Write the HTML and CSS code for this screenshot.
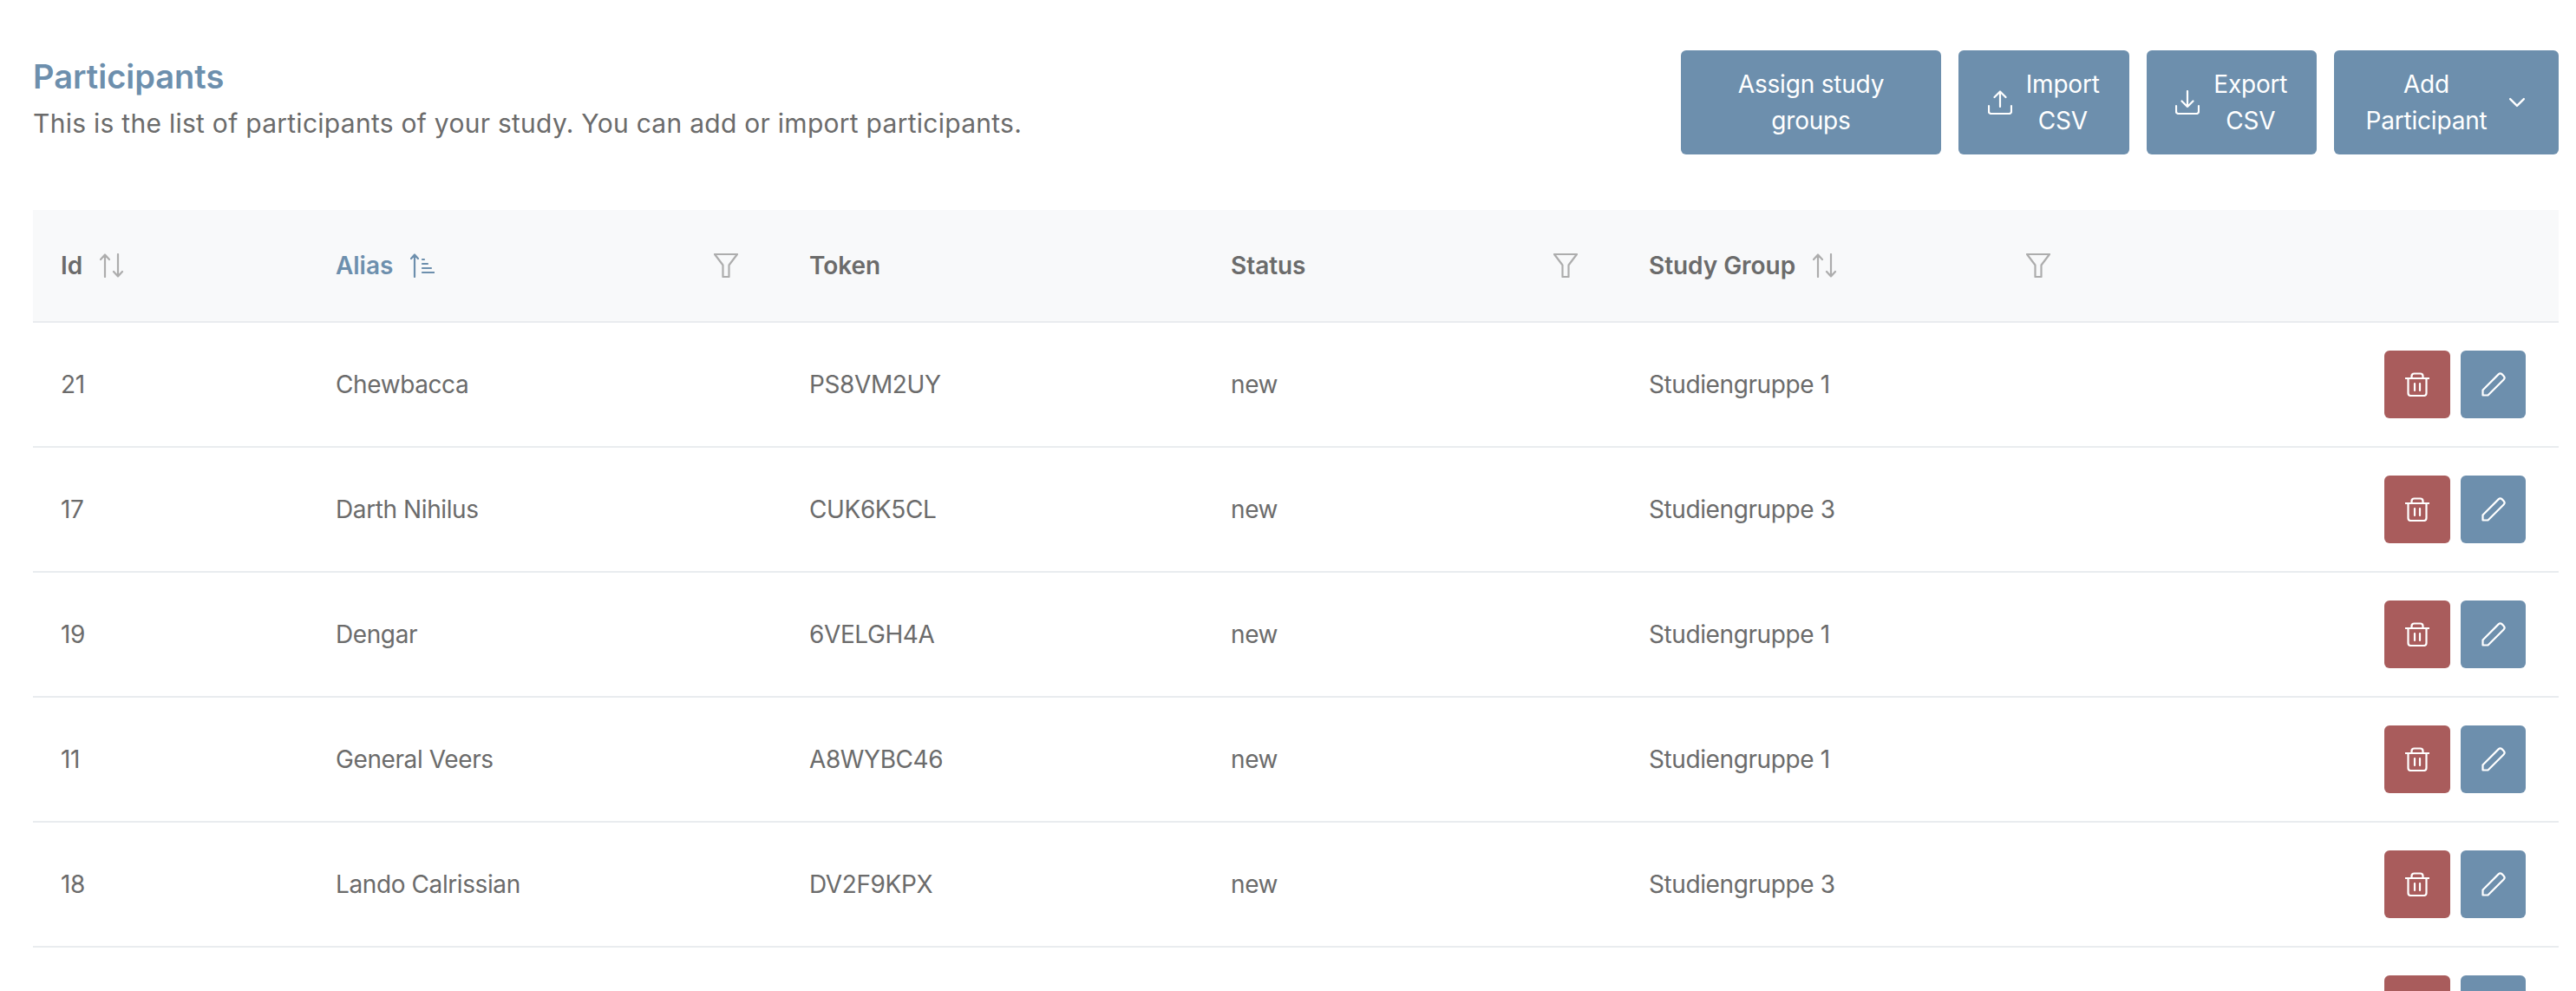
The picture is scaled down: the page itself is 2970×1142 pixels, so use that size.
FILE: index.html
```html
<!DOCTYPE html>
<html lang="en">
<head>
    <meta charset="UTF-8">
    <title>Participants</title>
    <link rel="stylesheet" href="styles.css">
</head>
<body>
    <svg class="sprite" width="0" height="0">
        <symbol id="i-upload" viewBox="0 0 28 28"><path d="M1 18v6.500a2.500 2.500 0 0 0 2.500 2.500h21a2.500 2.500 0 0 0 2.500-2.500V18M14 19V1.500M7.500 8L14 1.500 20.500 8"/></symbol>
        <symbol id="i-download" viewBox="0 0 28 28"><path d="M1 18v6.500a2.500 2.500 0 0 0 2.500 2.500h21a2.500 2.500 0 0 0 2.500-2.500V18M14 1v18M7.500 12.500L14 19l6.500-6.500"/></symbol>
        <symbol id="i-chevron" viewBox="0 0 28 28"><path d="M4 9l10 10 10-10"/></symbol>
        <symbol id="i-sort" viewBox="0 0 28 28"><path d="M6 27V1.500M1 7l5-5.500L11 7M21 1v25.500M16 21l5 5.500 5-5.500"/></symbol>
        <symbol id="i-sort-asc" viewBox="0 0 28 28"><path d="M5 27V1.500M1 6l4-4.500L9 6M14 7h2M14 12h6M14 17h10M14 22h14"/></symbol>
        <symbol id="i-filter" viewBox="0 0 28 28"><path d="M1 1h26L17.500 13.500V27h-7V13.500z"/></symbol>
        <symbol id="i-trash" viewBox="0 0 28 28"><path d="M0.500 7h27M3.500 7v17a3 3 0 0 0 3 3h15a3 3 0 0 0 3-3V7M7.500 7V4.500a3 3 0 0 1 3-3h7a3 3 0 0 1 3 3V7M11 13v8M17 13v8"/></symbol>
        <symbol id="i-pencil" viewBox="0 0 28 28"><path d="M1.500 26.500v-6L19.600 2.400a3 3 0 0 1 4.200 0l1.800 1.800a3 3 0 0 1 0 4.200L7.500 26.500z"/></symbol>
    </svg>

    <div class="page">
        <div class="toolbar">
            <div class="intro">
                <h1>Participants</h1>
                <p>This is the list of participants of your study. You can add or import participants.</p>
            </div>
            <div class="actions">
                <button class="btn btn-assign"><span>Assign study<br>groups</span></button>
                <button class="btn btn-csv"><svg class="icon"><use href="#i-upload"/></svg><span>Import<br>CSV</span></button>
                <button class="btn btn-csv"><svg class="icon"><use href="#i-download"/></svg><span>Export<br>CSV</span></button>
                <button class="btn btn-add"><span>Add<br>Participant</span><svg class="icon icon-chevron"><use href="#i-chevron"/></svg></button>
            </div>
        </div>

        <table class="grid">
            <colgroup>
                <col class="col-id"><col class="col-alias"><col class="col-token"><col class="col-status"><col class="col-group"><col>
            </colgroup>
            <thead>
                <tr>
                    <th><div class="th-inner"><span class="th-label">Id<svg class="icon icon-sort"><use href="#i-sort"/></svg></span></div></th>
                    <th class="sorted"><div class="th-inner"><span class="th-label">Alias<svg class="icon icon-sort"><use href="#i-sort-asc"/></svg></span><svg class="icon icon-filter"><use href="#i-filter"/></svg></div></th>
                    <th><div class="th-inner"><span class="th-label">Token</span></div></th>
                    <th><div class="th-inner"><span class="th-label">Status</span><svg class="icon icon-filter"><use href="#i-filter"/></svg></div></th>
                    <th><div class="th-inner"><span class="th-label">Study Group<svg class="icon icon-sort"><use href="#i-sort"/></svg></span><svg class="icon icon-filter"><use href="#i-filter"/></svg></div></th>
                    <th></th>
                </tr>
            </thead>
            <tbody>
                <tr>
                    <td>21</td><td>Chewbacca</td><td>PS8VM2UY</td><td>new</td><td>Studiengruppe 1</td>
                    <td><div class="row-actions"><button class="row-btn row-delete"><svg class="icon"><use href="#i-trash"/></svg></button><button class="row-btn row-edit"><svg class="icon"><use href="#i-pencil"/></svg></button></div></td>
                </tr>
                <tr>
                    <td>17</td><td>Darth Nihilus</td><td>CUK6K5CL</td><td>new</td><td>Studiengruppe 3</td>
                    <td><div class="row-actions"><button class="row-btn row-delete"><svg class="icon"><use href="#i-trash"/></svg></button><button class="row-btn row-edit"><svg class="icon"><use href="#i-pencil"/></svg></button></div></td>
                </tr>
                <tr>
                    <td>19</td><td>Dengar</td><td>6VELGH4A</td><td>new</td><td>Studiengruppe 1</td>
                    <td><div class="row-actions"><button class="row-btn row-delete"><svg class="icon"><use href="#i-trash"/></svg></button><button class="row-btn row-edit"><svg class="icon"><use href="#i-pencil"/></svg></button></div></td>
                </tr>
                <tr>
                    <td>11</td><td>General Veers</td><td>A8WYBC46</td><td>new</td><td>Studiengruppe 1</td>
                    <td><div class="row-actions"><button class="row-btn row-delete"><svg class="icon"><use href="#i-trash"/></svg></button><button class="row-btn row-edit"><svg class="icon"><use href="#i-pencil"/></svg></button></div></td>
                </tr>
                <tr>
                    <td>18</td><td>Lando Calrissian</td><td>DV2F9KPX</td><td>new</td><td>Studiengruppe 3</td>
                    <td><div class="row-actions"><button class="row-btn row-delete"><svg class="icon"><use href="#i-trash"/></svg></button><button class="row-btn row-edit"><svg class="icon"><use href="#i-pencil"/></svg></button></div></td>
                </tr>
                <tr>
                    <td></td><td></td><td></td><td></td><td></td>
                    <td><div class="row-actions"><button class="row-btn row-delete"><svg class="icon"><use href="#i-trash"/></svg></button><button class="row-btn row-edit"><svg class="icon"><use href="#i-pencil"/></svg></button></div></td>
                </tr>
            </tbody>
        </table>
    </div>
</body>
</html>
```

FILE: styles.css
```css
html, body {
    height: 100%;
    margin: 0;
    overflow: hidden;
    background: #fff;
}
body {
    font-family: Inter, "Noto Sans", sans-serif;
    font-size: 28px;
    letter-spacing: -0.4px;
    color: #6b6b6b;
}
.sprite {
    position: absolute;
}
.page {
    padding: 58px 20px 0 38px;
}
.toolbar {
    display: flex;
    justify-content: space-between;
    align-items: center;
    margin-bottom: 64px;
}
.intro {
    padding-bottom: 6px;
}
.intro h1 {
    margin: 0 0 12px;
    font-size: 38px;
    line-height: 42px;
    letter-spacing: 0;
    font-weight: 600;
    color: #6d8fad;
}
.intro p {
    margin: 0;
    font-size: 30px;
    line-height: 42px;
    letter-spacing: 0.27px;
}
.actions {
    display: flex;
    gap: 20px;
}
.icon {
    display: block;
    flex: none;
    width: 28px;
    height: 28px;
    fill: none;
    stroke: currentColor;
    stroke-width: 2.2;
    stroke-linecap: round;
    stroke-linejoin: round;
}
.btn {
    display: flex;
    align-items: center;
    justify-content: center;
    gap: 16px;
    height: 120px;
    padding: 0;
    border: none;
    border-radius: 6px;
    background: #6d8fad;
    color: #fff;
    font-family: inherit;
    font-size: 28px;
    line-height: 42px;
    letter-spacing: -0.2px;
    text-align: center;
}
.btn-assign {
    width: 300px;
}
.btn-csv {
    width: 196.5px;
}
.btn-add {
    width: 259px;
    gap: 24px;
}
.icon-chevron {
    width: 22px;
    height: 22px;
    stroke-width: 3;
}
.grid {
    width: 100%;
    table-layout: fixed;
    border-collapse: separate;
    border-spacing: 0;
}
.col-id {
    width: 317px;
}
.col-alias {
    width: 546px;
}
.col-token {
    width: 486px;
}
.col-status {
    width: 482px;
}
.col-group {
    width: 545px;
}
.grid th {
    height: 130px;
    box-sizing: border-box;
    padding: 0 50px 0 32px;
    background: #f8f9fa;
    border-bottom: 2px solid #e9ecef;
    font-weight: 600;
    letter-spacing: -0.05px;
    text-align: left;
}
.grid td {
    height: 144px;
    box-sizing: border-box;
    padding: 0 0 0 32px;
    border-bottom: 2px solid #e9ecef;
}
.th-inner {
    display: flex;
    justify-content: space-between;
    align-items: center;
}
.th-label {
    display: flex;
    align-items: center;
    gap: 20px;
}
.sorted {
    color: #6d8fad;
}
.icon-sort, .icon-filter {
    color: #adadad;
}
.sorted .icon-sort {
    color: #6d8fad;
}
.row-actions {
    display: flex;
    justify-content: flex-end;
    gap: 12px;
    padding-right: 38px;
}
.row-btn {
    display: flex;
    align-items: center;
    justify-content: center;
    height: 78px;
    padding: 0;
    border: none;
    border-radius: 6px;
    color: #fff;
}
.row-delete {
    width: 76px;
    background: #a95c5c;
}
.row-edit {
    width: 75px;
    background: #6d8fad;
}
```
